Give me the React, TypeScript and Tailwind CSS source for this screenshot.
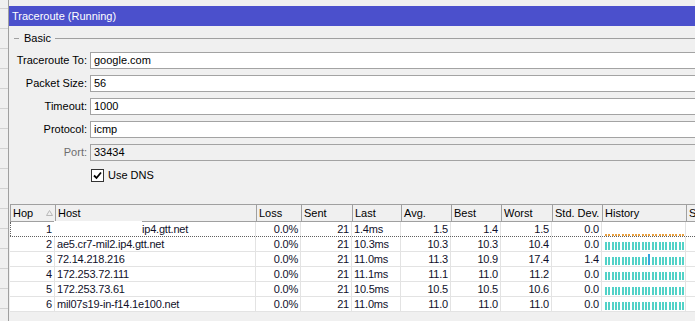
import React from 'react';

type HopRow = {
  hop: number;
  host: string;
  loss: string;
  sent: string;
  last: string;
  avg: string;
  best: string;
  worst: string;
  dev: string;
  spike?: number;
  pending?: boolean;
};

const hops: HopRow[] = [
  { hop: 1, host: 'ip4.gtt.net', loss: '0.0%', sent: '21', last: '1.4ms', avg: '1.5', best: '1.4', worst: '1.5', dev: '0.0', pending: true },
  { hop: 2, host: 'ae5.cr7-mil2.ip4.gtt.net', loss: '0.0%', sent: '21', last: '10.3ms', avg: '10.3', best: '10.3', worst: '10.4', dev: '0.0' },
  { hop: 3, host: '72.14.218.216', loss: '0.0%', sent: '21', last: '11.0ms', avg: '11.3', best: '10.9', worst: '17.4', dev: '1.4', spike: 13 },
  { hop: 4, host: '172.253.72.111', loss: '0.0%', sent: '21', last: '11.1ms', avg: '11.1', best: '11.0', worst: '11.2', dev: '0.0' },
  { hop: 5, host: '172.253.73.61', loss: '0.0%', sent: '21', last: '10.5ms', avg: '10.5', best: '10.5', worst: '10.6', dev: '0.0' },
  { hop: 6, host: 'mil07s19-in-f14.1e100.net', loss: '0.0%', sent: '21', last: '11.0ms', avg: '11.0', best: '11.0', worst: '11.0', dev: '0.0' },
];

const fields = [
  { label: 'Traceroute To:', value: 'google.com' },
  { label: 'Packet Size:', value: '56' },
  { label: 'Timeout:', value: '1000' },
  { label: 'Protocol:', value: 'icmp' },
  { label: 'Port:', value: '33434', disabled: true },
];

const columns = [
  { label: 'Hop', width: 'w-[45px]' },
  { label: 'Host', width: 'w-[201px]' },
  { label: 'Loss', width: 'w-[45px]' },
  { label: 'Sent', width: 'w-[51px]' },
  { label: 'Last', width: 'w-[49px]' },
  { label: 'Avg.', width: 'w-[50px]' },
  { label: 'Best', width: 'w-[50px]' },
  { label: 'Worst', width: 'w-[51px]' },
  { label: 'Std. Dev.', width: 'w-[50px]' },
  { label: 'History', width: 'w-[84px]' },
  { label: 'St', width: 'w-[40px]' },
];

function History({ spike, pending }: { spike?: number; pending?: boolean }) {
  return (
    <div className={`flex h-full w-[79px] items-end justify-between ${pending ? 'pb-0' : 'pb-[1px]'}`}>
      {Array.from({ length: 24 }).map((_, i) =>
        pending ? (
          <span key={i} className="h-[2px] w-[2px] bg-[#e9a040]" />
        ) : (
          <span
            key={i}
            className={i === spike ? 'h-[11px] w-[2px] bg-[#38a4dd]' : 'h-[8px] w-[2px] bg-[#52d2c7]'}
          />
        )
      )}
    </div>
  );
}

function Row({ r }: { r: HopRow }) {
  const focus = r.hop === 1;
  const cell = 'flex h-full shrink-0 items-center border-r border-[#e3e3e3]';
  return (
    <div
      className={`flex h-[15px] ${focus ? 'border-b border-dotted border-[#606060]' : 'border-b border-[#e3e3e3]'}`}
    >
      <div className={`${cell} w-[45px] justify-end pr-[2px] ${focus ? 'border-l border-dotted border-l-[#606060] border-r-white' : ''}`}>
        {r.hop}
      </div>
      <div className={`${cell} w-[201px] ${focus ? 'pl-[87px]' : 'pl-[2px]'}`}>{r.host}</div>
      <div className={`${cell} w-[45px] justify-end pr-[2px]`}>{r.loss}</div>
      <div className={`${cell} w-[51px] justify-end pr-[2px]`}>{r.sent}</div>
      <div className={`${cell} w-[49px] pl-[2px]`}>{r.last}</div>
      <div className={`${cell} w-[50px] justify-end pr-[2px]`}>{r.avg}</div>
      <div className={`${cell} w-[50px] justify-end pr-[2px]`}>{r.best}</div>
      <div className={`${cell} w-[51px] justify-end pr-[2px]`}>{r.worst}</div>
      <div className={`${cell} w-[50px] justify-end pr-[2px]`}>{r.dev}</div>
      <div className={`${cell} w-[84px] pl-[3px]`}>
        <History spike={r.spike} pending={r.pending} />
      </div>
      <div className={`${cell} w-[40px]`} />
    </div>
  );
}

export default function App() {
  return (
    <div className="flex h-[321px] w-[695px] overflow-hidden bg-[#f0f0f0] font-['Liberation_Sans',Arial,sans-serif] text-[11px] text-black">
      {/* neighbouring list behind the window */}
      <div className="flex w-[8px] shrink-0 flex-col pt-[8px]">
        {Array.from({ length: 16 }).map((_, i) => (
          <div key={i} className="h-[20px] shrink-0 border-t border-[#d2d2d2]" />
        ))}
      </div>

      <div className="flex min-w-0 flex-1 flex-col border-l border-[#a0a0a0]">
        <div className="mt-[6px] flex h-[20px] shrink-0 items-center bg-[#4b50cc] pl-[3px] text-[11px] text-white">
          Traceroute (Running)
        </div>

        <div className="mt-[6px] flex h-[12px] items-center">
          <div className="ml-[5px] w-[5px] border-t border-[#a0a0a0]" />
          <span className="ml-[5px] leading-none">Basic</span>
          <div className="ml-[4px] flex-1 border-t border-[#a0a0a0]" />
        </div>

        <div className="mt-[8px] flex flex-col gap-[6px]">
          {fields.map((f) => (
            <div key={f.label} className="flex h-[17px] items-center">
              <div className={`w-[78px] shrink-0 text-right ${f.disabled ? 'text-[#6d6d6d]' : ''}`}>{f.label}</div>
              <div
                className={`ml-[3px] flex h-[17px] w-[700px] shrink-0 items-center border border-[#a3a3a3] pl-[3px] ${
                  f.disabled ? 'bg-[#f0f0f0]' : 'bg-white'
                }`}
              >
                {f.value}
              </div>
            </div>
          ))}
        </div>

        <div className="mt-[8px] flex h-[13px] items-center pl-[82px]">
          <div className="flex h-[13px] w-[13px] items-center justify-center border border-[#333] bg-white">
            <svg width="9" height="9" viewBox="0 0 9 9">
              <path d="M1 4.5 L3.5 7 L8 1.5" fill="none" stroke="#000" strokeWidth="1.8" />
            </svg>
          </div>
          <span className="ml-[4px]">Use DNS</span>
        </div>

        <div className="relative mt-[22px] ml-[1px]">
          <div className="flex h-[18px] border-y border-l border-[#a0a0a0] bg-[#f0f0f0]">
            {columns.map((c, i) => (
              <div
                key={c.label}
                className={`flex h-full shrink-0 items-center border-r border-[#a0a0a0] pl-[2px] ${c.width}`}
              >
                <span>{c.label}</span>
                {i === 0 && (
                  <svg className="ml-auto mr-[2px]" width="7" height="6" viewBox="0 0 7 6">
                    <path d="M3.5 0.5 L6.5 5.5 L0.5 5.5 Z" fill="none" stroke="#b8b8b8" strokeWidth="1" />
                  </svg>
                )}
              </div>
            ))}
          </div>
          <div className="bg-white text-[#10102a] tracking-[-0.2px]">
            {hops.map((r) => (
              <Row key={r.hop} r={r} />
            ))}
          </div>
          {/* blanked-out part of the first host name */}
          <div className="absolute left-[44px] top-[17px] h-[15px] w-[88px] bg-white" />
        </div>
      </div>
    </div>
  );
}
